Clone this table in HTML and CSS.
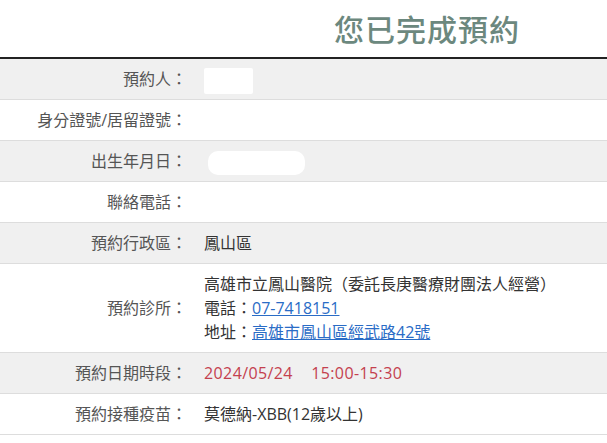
FILE: index.html
```html
<!DOCTYPE html>
<html lang="zh-Hant">

<head>
  <meta charset="utf-8">
  <meta name="viewport" content="width=device-width, initial-scale=1.0">
  <title>預約完成</title>
  <link rel="stylesheet" href="styles.css">
</head>

<body>
  <div class="header">
    <h1>您已完成預約</h1>
  </div>

  <div class="detail">
    <div class="row gray">
      <div class="label">預約人：</div>
      <div class="value"><span class="mask mask-name"></span></div>
    </div>
    <div class="row">
      <div class="label">身分證號/居留證號：</div>
      <div class="value"></div>
    </div>
    <div class="row gray">
      <div class="label">出生年月日：</div>
      <div class="value"><span class="mask mask-birth"></span></div>
    </div>
    <div class="row">
      <div class="label">聯絡電話：</div>
      <div class="value"></div>
    </div>
    <div class="row gray">
      <div class="label">預約行政區：</div>
      <div class="value">鳳山區</div>
    </div>
    <div class="row">
      <div class="label">預約診所：</div>
      <div class="value multi">
        <div class="line">高雄市立鳳山醫院（委託長庚醫療財團法人經營）</div>
        <div class="line">電話：<a href="#">07-7418151</a></div>
        <div class="line">地址：<a href="#">高雄市鳳山區經武路42號</a></div>
      </div>
    </div>
    <div class="row gray">
      <div class="label">預約日期時段：</div>
      <div class="value date">2024/05/24&nbsp;&nbsp;&nbsp;&nbsp;15:00-15:30</div>
    </div>
    <div class="row">
      <div class="label">預約接種疫苗：</div>
      <div class="value">莫德納-XBB(12歲以上)</div>
    </div>
  </div>
</body>

</html>
```

FILE: styles.css
```css
* {
  margin: 0;
  padding: 0;
  box-sizing: border-box;
}

body {
  font-family: 'Open Sans', 'Noto Sans CJK TC', sans-serif;
  background: #fff;
  color: #333;
}

.header {
  height: 59px;
  display: flex;
  align-items: center;
  justify-content: flex-end;
  padding-right: 87px;
  padding-bottom: 2px;
  border-bottom: 2px solid #222;
}

h1 {
  font-size: 30px;
  font-weight: 500;
  color: #6c887e;
  letter-spacing: 1px;
}

.row {
  display: grid;
  grid-template-columns: 187px 1fr;
  column-gap: 17px;
  align-items: center;
  padding: 8px 0;
  border-bottom: 1px solid #ddd;
  font-size: 16px;
  line-height: 24px;
}

.gray {
  background: #f0f0f0;
}

.label {
  height: 24px;
  text-align: right;
  color: #555;
  white-space: nowrap;
}

.value {
  height: 24px;
  color: #333;
  white-space: nowrap;
}

.value.multi {
  height: auto;
}

.line {
  height: 24px;
}

.value a {
  color: #2a6cc6;
}

.date {
  color: #c4404e;
  letter-spacing: 0.4px;
}

.mask {
  display: inline-block;
  background: #fff;
  vertical-align: middle;
}

.mask-name {
  width: 49px;
  height: 26px;
  border-radius: 2px;
}

.mask-birth {
  width: 97px;
  height: 24px;
  margin-left: 4px;
  border-radius: 10px;
}
```
